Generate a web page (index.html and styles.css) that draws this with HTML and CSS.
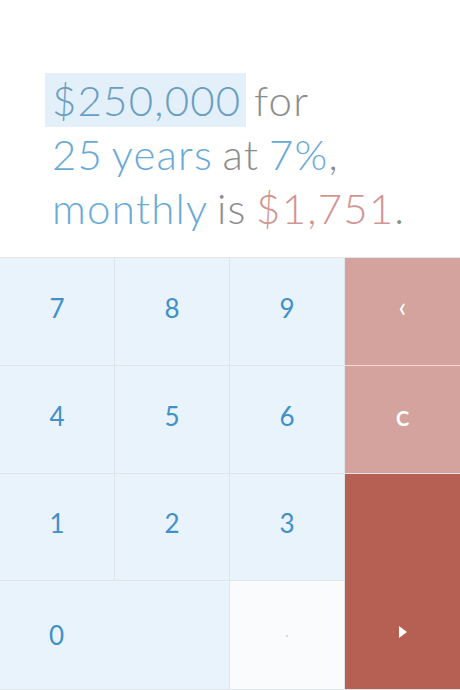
FILE: index.html
```html
<!DOCTYPE html>
<html>
<head>
<meta charset="utf-8">
<link rel="stylesheet" href="styles.css">
</head>
<body>
<div class="app">
  <div class="sentence">
    <span class="amount">$250,000</span> <span class="muted">for</span><br>
    <span class="blue">25 years</span> <span class="muted">at</span> <span class="blue">7%</span><span class="muted">,</span><br>
    <span class="blue">monthly</span> <span class="muted">is</span> <span class="result">$1,751</span><span class="muted">.</span>
  </div>
  <div class="keypad">
    <div class="key">7</div>
    <div class="key">8</div>
    <div class="key">9</div>
    <div class="key action back">‹</div>
    <div class="key">4</div>
    <div class="key">5</div>
    <div class="key">6</div>
    <div class="key action clear">C</div>
    <div class="key">1</div>
    <div class="key">2</div>
    <div class="key">3</div>
    <div class="key go">
      <svg width="10" height="14" viewBox="0 0 10 14"><path d="M1 1 L9 7 L1 13 Z" fill="#fff"/></svg>
    </div>
    <div class="key zero">0</div>
    <div class="key dot">.</div>
  </div>
</div>
</body>
</html>
```
FILE: styles.css
```css
* { box-sizing: border-box; }
html, body { margin: 0; padding: 0; background: #fff; }
.app {
  width: 460px;
  height: 690px;
  display: flex;
  flex-direction: column;
  font-family: Lato, "Open Sans", sans-serif;
}
.sentence {
  height: 258px;
  padding: 73px 0 0 52px;
  font-size: 42px;
  font-weight: 300;
  line-height: 54px;
  letter-spacing: 1.2px;
  word-spacing: -3px;
  border-bottom: 1px solid #e4e6e8;
}
.amount {
  display: inline-block;
  background: #e3f0fa;
  color: #6a9ec3;
  padding: 0 5px 0 7px;
  margin-left: -7px;
  margin-right: -2px;
}
.muted { color: #8c8c8c; }
.blue { color: #6aaad7; }
.result { color: #d29592; }
.keypad {
  flex: 1;
  display: grid;
  grid-template-columns: 114px 114px 114px 115px;
  grid-template-rows: 107px 107px 106px 108px;
  column-gap: 1px;
  row-gap: 1px;
  background: #dfe5ea;
}
.key {
  background: #e8f3fb;
  color: #4190ca;
  font-size: 26px;
  font-weight: 400;
  display: flex;
  align-items: center;
  justify-content: center;
  padding-bottom: 8px;
}
.action {
  background: #d4a39d;
  color: #fff;
  font-weight: 700;
  font-size: 20px;
}
.back { font-size: 28px; font-weight: 400; padding-bottom: 12px; }
.clear { border-top: 1px solid #f1dcd9; margin-top: -1px; padding-bottom: 4px; }
.go {
  grid-column: 4;
  grid-row: 3 / span 2;
  background: #b56053;
  padding-top: 108px;
}
.zero { grid-column: 1 / span 2; justify-content: flex-start; padding-left: 49px; padding-bottom: 0; }
.dot { background: #f9fbfd; color: #c4c9cd; font-size: 14px; }
```
